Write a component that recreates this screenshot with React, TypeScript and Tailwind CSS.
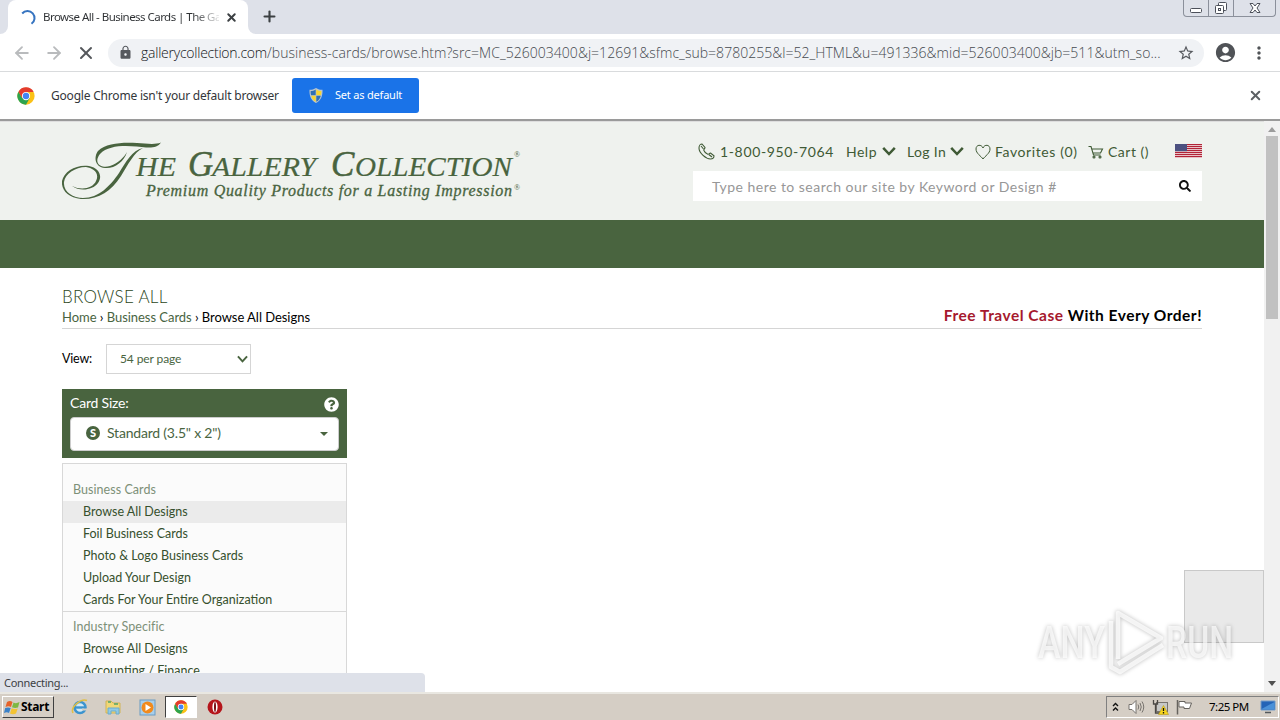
import React from 'react';
import { X, Plus, ArrowLeft, ArrowRight } from 'lucide-react';
import { FaSearch, FaQuestionCircle } from 'react-icons/fa';
import { MdAccountCircle, MdLock, MdStarBorder, MdMoreVert } from 'react-icons/md';

const ChromeLogo = ({ size }: { size: number }) => (
  <svg width={size} height={size} viewBox="0 0 48 48" className="shrink-0">
    <circle cx="24" cy="24" r="23" fill="#fbc116" />
    <path d="M4 12.5 A23 23 0 0 0 24 47 L34 29.5 L14 29.5 Z" fill="#2da44f" />
    <path d="M24 13 H44.3 A23 23 0 0 0 4 12.5 L14 30 Z" fill="#e33b2e" />
    <circle cx="24" cy="24" r="11" fill="#fff" />
    <circle cx="24" cy="24" r="8.5" fill="#4285f4" />
  </svg>
);

const Shield = () => (
  <svg width="16" height="17" viewBox="0 0 16 17" className="shrink-0">
    <path d="M8 1 C6 2.4 4 2.8 1.5 2.8 C1.2 9 3 13.5 8 16 C13 13.5 14.8 9 14.5 2.8 C12 2.8 10 2.4 8 1Z" fill="#b9c6cf" />
    <path d="M7.7 2.4 C6 3.4 4.5 3.9 2.7 4 C2.6 5.8 2.7 7 3.1 8.3 H7.7Z" fill="#2f6fb5" />
    <path d="M8.3 2.4 C10 3.4 11.5 3.9 13.3 4 C13.4 5.8 13.3 7 12.9 8.3 H8.3Z" fill="#f7d531" />
    <path d="M3.2 8.7 H7.7 V14.8 C5.2 13.4 3.8 11.3 3.2 8.7Z" fill="#f7d531" />
    <path d="M12.8 8.7 H8.3 V14.8 C10.8 13.4 12.2 11.3 12.8 8.7Z" fill="#2f6fb5" />
  </svg>
);

const TabStrip = () => (
  <div className="flex h-[34px] shrink-0 items-start justify-between bg-[#dee1e9]">
    <div className="flex h-[34px]">
      <div className="flex h-full w-2 bg-white">
        <div className="h-full w-2 rounded-br-lg bg-[#dee1e9]" />
      </div>
      <div className="flex h-full w-[240px] items-center rounded-t-lg bg-white pl-[13px]">
        <svg width="16" height="16" viewBox="0 0 16 16" className="shrink-0">
          <path d="M1.200 4.500 A7 7 0 1 1 10.500 14.800" fill="none" stroke="#3674c0" strokeWidth="2" />
        </svg>
        <span className="ml-[6px] w-[176px] bg-gradient-to-r from-[#2d3033] from-85% to-[#2d303322] bg-clip-text font-['Noto_Sans',sans-serif] text-[11.5px] tracking-[-0.54px] whitespace-nowrap text-transparent">
          Browse All - Business Cards | The Ga
        </span>
        <X size={13} strokeWidth={3.6} className="ml-[6px] shrink-0 text-[#3c4043]" />
      </div>
      <div className="h-full w-2 bg-white">
        <div className="h-full w-2 rounded-bl-lg bg-[#dee1e9]" />
      </div>
      <Plus size={17} strokeWidth={3} className="mt-[8px] ml-[5px] text-[#3c4043]" />
    </div>
    <div className="mr-[4px] flex h-[17px] w-[93px] rounded-b-[4px] border border-t-0 border-[#8b909b] text-[#4c505a]">
      <div className="flex w-[25px] justify-center border-r border-[#8b909b]">
        <svg width="14" height="16" viewBox="0 0 14 16">
          <rect x="1.5" y="8.5" width="11" height="4" rx="1" fill="#fff" stroke="currentColor" />
        </svg>
      </div>
      <div className="flex w-[25px] justify-center border-r border-[#8b909b]">
        <svg width="14" height="16" viewBox="0 0 14 16">
          <rect x="4.5" y="2.5" width="8" height="8" rx="1" fill="#fff" stroke="currentColor" />
          <rect x="1.5" y="5.5" width="8" height="8" rx="1" fill="#fff" stroke="currentColor" />
          <rect x="4.5" y="8.5" width="2" height="2" fill="none" stroke="currentColor" />
        </svg>
      </div>
      <div className="flex flex-1 justify-center">
        <svg width="14" height="16" viewBox="0 0 14 16">
          <path d="M2 3.5 H5 L7 6 L9 3.5 H12 L9 8 L12 12.5 H9 L7 10 L5 12.5 H2 L5 8 Z" fill="#fff" stroke="currentColor" />
        </svg>
      </div>
    </div>
  </div>
);

const Toolbar = () => (
  <div className="flex h-[38px] shrink-0 items-center border-b border-[#d9dbdd] bg-white font-['Open_Sans',sans-serif]">
    <ArrowLeft size={20} strokeWidth={2.2} className="ml-[12px] text-[#b9bbbd]" />
    <ArrowRight size={20} strokeWidth={2.2} className="ml-[12px] text-[#b9bbbd]" />
    <X size={20} strokeWidth={2.4} className="ml-[12px] text-[#54575b]" />
    <div className="ml-[12px] flex h-[28px] w-[1096px] items-center rounded-full bg-[#f0f2f5] pl-[10px]">
      <MdLock size={15} className="shrink-0 text-[#56595e]" />
      <span className="ml-[8px] w-[1036px] text-[14px] font-light whitespace-nowrap text-[#45494e]">
        <span className="tracking-[-0.24px] text-[#111417]">gallerycollection.com</span>
        <span className="tracking-[0.03px]">/business-cards/browse.htm?src=MC_526003400&amp;j=12691&amp;sfmc_sub=8780255&amp;l=52_HTML&amp;u=491336&amp;mid=526003400&amp;jb=511&amp;utm_so...</span>
      </span>
      <MdStarBorder size={18} className="shrink-0 text-[#56595e]" />
    </div>
    <MdAccountCircle size={23} className="ml-[10px] text-[#505357]" />
    <MdMoreVert size={20} className="ml-[12px] text-[#505357]" />
  </div>
);

const InfoBar = () => (
  <div className="flex h-[49px] shrink-0 items-center border-b-2 border-[#9a9a9a] bg-white font-['Noto_Sans',sans-serif]">
    <div className="ml-[17px]"><ChromeLogo size={18} /></div>
    <span className="ml-[16px] w-[241px] text-[12px] tracking-[-0.2px] whitespace-nowrap text-[#33363a]">
      Google Chrome isn't your default browser
    </span>
    <button className="flex h-[35px] w-[127px] items-center rounded-[3px] bg-[#1a73e8] pl-[16px] text-[11px] tracking-[-0.2px] whitespace-nowrap text-white">
      <Shield />
      <span className="ml-[11px]">Set as default</span>
    </button>
    <X size={15} strokeWidth={3.2} className="mr-[17px] ml-auto text-[#5c6064]" />
  </div>
);

const Logo = () => (
  <svg width="462" height="62" viewBox="0 0 462 62" fill="#49643f" className="font-['Liberation_Serif',serif] italic">
    <path d="M36 9 C44 1 61 0 75 1 C84 1.500 93 3 99 0.500 C96 5 91 6 84 5.500 C71 4 48 1 38 12 C31 21 39 27 48 24 C57 21 62 15 65 10 C62 20 52 27 43 26 C32 25 32 14 36 9Z" />
    <path d="M81 6 C72 10 66 23 59 34 C49 50 35 58 19 57 C6 56 -1 48 0 39 C2 29 15 22 27 24 C37 26 41 34 36 41 C31 48 18 50 10 44 C20 49 31 46 34 39 C38 31 31 26 24 25 C13 25 3 32 2 40 C1 50 11 56 21 56 C37 56 48 44 57 31 C64 20 70 8 81 6Z" />
    <text x="74" y="34" fontSize="27" textLength="40" lengthAdjust="spacingAndGlyphs" stroke="#49643f" strokeWidth=".2">HE</text>
    <text x="126" y="34" fontSize="35" stroke="#49643f" strokeWidth=".5">G</text>
    <text x="150" y="34" fontSize="27" textLength="104" lengthAdjust="spacingAndGlyphs" stroke="#49643f" strokeWidth=".2">ALLERY</text>
    <text x="269" y="34" fontSize="35" stroke="#49643f" strokeWidth=".5">C</text>
    <text x="293" y="34" fontSize="27" textLength="157" lengthAdjust="spacingAndGlyphs" stroke="#49643f" strokeWidth=".2">OLLECTION</text>
    <text x="84" y="54" fontSize="16" textLength="366" stroke="#49643f" strokeWidth=".3">Premium Quality Products for a Lasting Impression</text>
    <text x="452" y="15" fontSize="8" className="not-italic">®</text>
    <text x="452" y="48" fontSize="8" className="not-italic">®</text>
  </svg>
);

const Chevron = ({ width }: { width: number }) => (
  <svg width={width} height={width * 0.72} viewBox="0 0 14 10" className="shrink-0">
    <path d="M1.200 1.800 L7 8 L12.800 1.800" fill="none" stroke="currentColor" strokeWidth="2.500" />
  </svg>
);

const PhoneIcon = () => (
  <svg width="17" height="17" viewBox="0 0 17 17" fill="none" stroke="currentColor" strokeWidth="1.100" className="shrink-0">
    <path d="M1 5 C1 2.500 2.500 1 4 1 L7 4.500 C7.200 5.500 5.500 6.200 5.800 7.200 C6.500 9 8 10.500 9.800 11.200 C11 11.500 11.500 9.800 12.500 10 L16 12.800 C16 14.500 14.500 16 12.500 16 C8 16 1 10 1 5Z" />
    <path d="M3 3 L5.500 6 M10.800 11.500 L14 14" />
  </svg>
);

const HeartIcon = () => (
  <svg width="16" height="16" viewBox="0 0 16 16" fill="none" stroke="currentColor" className="shrink-0">
    <path d="M8 15 C6 12 1 9.500 1 5 C1 0.500 6.500 0 8 4 C9.500 0 15 0.500 15 5 C15 9.500 10 12 8 15Z" />
  </svg>
);

const CartIcon = () => (
  <svg width="16" height="14" viewBox="0 0 16 14" fill="none" stroke="currentColor" strokeWidth="1.100" className="shrink-0">
    <path d="M0.500 1.500 H3 L5.500 10 H12.500 M4 4 H14.500 L12.500 8 H5" />
    <circle cx="6" cy="12" r="1" />
    <circle cx="12" cy="12" r="1" />
  </svg>
);

const Flag = () => (
  <svg width="27" height="14" viewBox="0 0 27 14">
    <rect width="27" height="14" fill="#f4e9ea" />
    {[0, 2, 4, 6, 8, 10, 12].map((y) => (
      <rect key={y} y={y} width="27" height="1.2" fill="#b22437" />
    ))}
    <rect width="12" height="7.200" fill="#4c5180" />
  </svg>
);

const SiteHeader = () => (
  <>
    <div className="flex h-[99px] shrink-0 justify-between border-t border-[#dedede] bg-[#eff2ee] pr-[62px] pl-[62px] text-[#3f5a35]">
      <div className="pt-[20px]"><Logo /></div>
      <div className="w-[509px] pt-[19px]">
        <div className="flex h-[21px] items-center text-[14px] whitespace-nowrap">
          <span className="ml-[5px]"><PhoneIcon /></span>
          <span className="ml-[5px] w-[126px] tracking-[0.65px]">1-800-950-7064</span>
          <span className="w-[36px] tracking-[0.5px]">Help</span>
          <Chevron width={14} />
          <span className="ml-[11px] w-[43px] tracking-[0.35px]">Log In</span>
          <Chevron width={14} />
          <span className="ml-[11px]"><HeartIcon /></span>
          <span className="ml-[4px] w-[93px] tracking-[0.6px]">Favorites (0)</span>
          <CartIcon />
          <span className="ml-[4px] tracking-[0.5px]">Cart ()</span>
          <div className="mb-[2px] ml-auto"><Flag /></div>
        </div>
        <div className="mt-[9px] flex h-[30px] items-center justify-between bg-white pr-[11px] pl-[19px]">
          <span className="text-[14px] tracking-[0.48px] text-[#979797]">Type here to search our site by Keyword or Design #</span>
          <FaSearch size={12} className="text-[#111]" />
        </div>
      </div>
    </div>
    <div className="h-[48px] shrink-0 bg-[#49643f]" />
  </>
);

const sections = [
  {
    title: 'Business Cards',
    items: ['Browse All Designs', 'Foil Business Cards', 'Photo & Logo Business Cards', 'Upload Your Design', 'Cards For Your Entire Organization'],
  },
  {
    title: 'Industry Specific',
    items: ['Browse All Designs', 'Accounting / Finance'],
  },
];

const Sidebar = () => (
  <aside className="w-[285px]">
    <div className="h-[69px] bg-[#49643f] px-[8px]">
      <div className="flex h-[28px] items-center justify-between text-[14px] text-white">
        <span className="mb-[1px] tracking-[-0.2px]">Card Size:</span>
        <FaQuestionCircle size={15} className="mt-[2px]" />
      </div>
      <div className="flex h-[34px] items-center rounded-[4px] border border-[#ccc] bg-white pr-[10px] pb-[2px] pl-[15px] text-[14px] text-[#49643f]">
        <span className="flex size-[14px] items-center justify-center rounded-full bg-[#49643f] text-[11px] font-black text-white">S</span>
        <span className="mb-[1px] ml-[7px] tracking-[-0.2px]">Standard (3.5" x 2")</span>
        <span className="mt-[1px] ml-auto border-x-4 border-t-4 border-x-transparent border-t-[#49643f]" />
      </div>
    </div>
    <div className="mt-[5px] border border-[#d8d8d8] bg-[#fbfbfb] pt-[15px] text-[12.5px] leading-[22px]">
      {sections.map((section, i) => (
        <div key={section.title} className={i > 0 ? 'border-t border-[#d8d8d8] pt-[4px]' : ''}>
          <div className="h-[22px] pl-[10px] tracking-[0.05px] text-[#7d9078]">{section.title}</div>
          {section.items.map((item, j) => (
            <div key={item} className={`h-[22px] pl-[20px] text-[#36502d] ${i === 0 && j === 0 ? 'bg-[#ebebeb]' : ''}`}>
              {item}
            </div>
          ))}
        </div>
      ))}
    </div>
  </aside>
);

const Content = () => (
  <main className="h-[424px] shrink-0 overflow-hidden bg-white px-[62px] pt-[18px]">
    <div className="flex h-[43px] items-end justify-between border-b border-[#d5d5d5]">
      <div className="pb-[1px]">
        <h1 className="text-[17px] leading-[20px] font-light tracking-[0.25px] text-[#2a4520]">BROWSE ALL</h1>
        <div className="text-[13px] leading-[20px] tracking-[-0.04px] text-black">
          <span className="text-[#49643f]">Home</span> › <span className="text-[#49643f]">Business Cards</span> › Browse All Designs
        </div>
      </div>
      <div className="pb-[1px] text-[15.5px] leading-[24px] font-bold tracking-[0.5px] text-black">
        <span className="text-[#a6192e]">Free Travel Case</span> With Every Order!
      </div>
    </div>
    <div className="mt-[15px] flex h-[30px] items-center text-[12px] text-black">
      <span className="w-[44px] text-[12.5px] tracking-[-0.2px]">View:</span>
      <div className="flex h-full w-[145px] items-center justify-between border border-[#d5d5d5] pr-[2px] pl-[13px] text-[#49643f]">
        <span className="tracking-[-0.1px]">54 per page</span>
        <Chevron width={11} />
      </div>
    </div>
    <div className="mt-[15px]"><Sidebar /></div>
  </main>
);

const Scrollbar = () => (
  <div className="flex w-[16px] shrink-0 flex-col items-center justify-between bg-[#f1f1f1] pt-[6px] pb-[6px]">
    <div className="flex flex-col items-center">
      <span className="border-x-4 border-b-[5px] border-x-transparent border-b-[#9c9c9c]" />
      <span className="mt-[4px] h-[183px] w-[12px] bg-[#c1c1c1]" />
    </div>
    <span className="border-x-4 border-t-[5px] border-x-transparent border-t-[#505050]" />
  </div>
);

const Watermark = () => (
  <svg width="200" height="68" viewBox="0 0 200 68" className="absolute top-[607px] left-[1036px] overflow-visible font-['Roboto',sans-serif] drop-shadow-[0_0_2px_rgba(0,0,0,0.35)]">
    <g fill="#fff" fillOpacity=".7" fontSize="45" fontWeight="500">
      <text x="2" y="51" textLength="67" lengthAdjust="spacingAndGlyphs">ANY</text>
      <text x="130" y="51" textLength="67" lengthAdjust="spacingAndGlyphs">RUN</text>
    </g>
    <g fill="none" stroke="#fff" strokeOpacity=".75" strokeWidth="4.500" strokeLinejoin="round">
      <path d="M82 52 V6 L125 31 L82 57" />
      <path d="M75 14 V60 L84 65 L127 38" />
    </g>
  </svg>
);

const Taskbar = () => (
  <div className="flex h-[28px] shrink-0 border-t-2 border-[#e9e7e1] bg-[#d5cec5] font-['Noto_Sans',sans-serif] text-black">
    <div className="mt-[2px] ml-[2px] flex h-[22px] w-[52px] items-center border border-t-white border-r-[#404040] border-b-[#404040] border-l-white pl-[1px]">
      <svg width="17" height="16" viewBox="0 0 17 16" className="shrink-0">
        <path d="M3 3 Q6 1 8.500 3 L7 8 Q4.500 6.500 1.500 8Z" fill="#e6632a" />
        <path d="M9.500 3.500 Q12 5 15.500 3 L14 8.500 Q11 9.500 8 8.300Z" fill="#7eb843" />
        <path d="M1.200 9 Q4 7.800 6.700 9 L5 14 Q3 12.500 0 14Z" fill="#3b82c9" />
        <path d="M7.700 9.300 Q10.500 10.700 13.700 9.500 L12 14.500 Q9 16 6 14.500Z" fill="#f3c332" />
      </svg>
      <span className="text-[12px] font-bold tracking-[-0.3px]">Start</span>
    </div>
    <div className="flex items-center">
      <svg width="18" height="18" viewBox="0 0 18 18" className="ml-[17px]">
        <circle cx="9" cy="9.500" r="5.500" fill="#d4e9f4" stroke="#3c94cf" strokeWidth="2.600" />
        <path d="M4 9.500 H14" stroke="#3c94cf" strokeWidth="2.400" />
        <path d="M2 15 C-1 9 10 0 16 2.500" fill="none" stroke="#e1bf45" strokeWidth="1.500" />
        <path d="M11 11.500 H16" stroke="#d5cec5" strokeWidth="2" />
      </svg>
      <svg width="17" height="16" viewBox="0 0 17 16" className="ml-[16px]">
        <path d="M1 2 H6 L8 4 H15 V14 H1Z" fill="#f1d877" stroke="#d2b356" />
        <path d="M3 3 H6 M9 5 H13" stroke="#53a46b" strokeWidth="1.500" />
        <path d="M3 9 H14 V15 H11 V12 H6 V15 H3Z" fill="#8fc9e7" stroke="#6baccd" />
      </svg>
      <svg width="17" height="17" viewBox="0 0 17 17" className="ml-[17px]">
        <rect x="1" y="1" width="15" height="15" fill="#a8cfeb" stroke="#6b9bc4" />
        <circle cx="8.500" cy="8.500" r="6" fill="#f18a1d" />
        <path d="M6.500 5 L12 8.500 L6.500 12Z" fill="#fff" />
      </svg>
      <div className="ml-[9px] flex h-[22px] w-[32px] items-center justify-center border border-t-[#404040] border-r-white border-b-white border-l-[#404040] bg-white">
        <ChromeLogo size={14} />
      </div>
      <svg width="16" height="16" viewBox="0 0 16 16" className="ml-[10px]">
        <circle cx="8" cy="8" r="7.500" fill="#b5151b" />
        <ellipse cx="8" cy="8" rx="2.600" ry="5.500" fill="#fff" />
        <ellipse cx="8" cy="8" rx="1" ry="5" fill="#791015" />
      </svg>
    </div>
    <div className="mt-[2px] mr-[1px] ml-auto flex h-[22px] w-[173px] items-center border border-t-[#808080] border-r-white border-b-white border-l-[#808080] pl-[5px]">
      <svg width="7" height="10" viewBox="0 0 7 10" fill="none" stroke="#111" strokeWidth="1.400">
        <path d="M1 4 L3.500 1.500 L6 4 M1 8.500 L3.500 6 L6 8.500" />
      </svg>
      <svg width="17" height="16" viewBox="0 0 17 16" className="ml-[9px]" fill="none" stroke="#77736e">
        <path d="M1 5.500 H4 L8 1.500 V14.500 L4 10.500 H1Z" fill="#fff" />
        <path d="M10 5.500 Q11.500 8 10 10.500 M12 4 Q14.500 8 12 12 M14 2.500 Q17.500 8 14 13.500" />
      </svg>
      <svg width="17" height="16" viewBox="0 0 17 16" className="ml-[7px]">
        <rect x="4.500" y="3.500" width="11" height="9" fill="#c7c8c7" stroke="#77736e" />
        <path d="M1.500 1 V5 H5.500 V1 M3.500 5 V14 H8" fill="none" stroke="#4a4845" strokeWidth="1.300" />
        <path d="M11.500 6.500 L16.500 15.500 H6.500Z" fill="#f7d51d" stroke="#b69715" strokeWidth=".6" />
        <path d="M11.500 9 V12 M11.500 13 V14.500" stroke="#111" strokeWidth="1.300" />
      </svg>
      <svg width="17" height="16" viewBox="0 0 17 16" className="ml-[7px]" stroke="#66635e">
        <path d="M1.500 1 V15.500" strokeWidth="1.500" />
        <path d="M3 2.500 H9 V4 H15.500 L13.500 9.500 H8 V8 H3Z" fill="#fff" />
      </svg>
      <span className="ml-[16px] w-[51px] text-[11.5px] tracking-[-0.5px] whitespace-nowrap">7:25 PM</span>
      <svg width="16" height="14" viewBox="0 0 16 14">
        <path d="M1 1 H15 V10 H1Z" fill="#2464b7" stroke="#749cc8" />
        <path d="M1.500 9 L14.500 2 V9.500 H1.500Z" fill="#4b91d8" />
        <path d="M5 12.500 H11" stroke="#53585c" strokeWidth="1.500" />
      </svg>
    </div>
  </div>
);

export default function App() {
  return (
    <div className="relative flex h-[720px] w-[1280px] flex-col overflow-hidden bg-white font-['Lato',sans-serif]">
      <TabStrip />
      <Toolbar />
      <InfoBar />
      <div className="flex h-[571px] shrink-0">
        <div className="flex min-w-0 flex-1 flex-col">
          <SiteHeader />
          <Content />
        </div>
        <Scrollbar />
      </div>
      <Taskbar />
      <div className="absolute top-[673px] left-0 h-[19px] w-[425px] rounded-tr-[4px] bg-[#dee1e9] pl-[4px] font-['Noto_Sans',sans-serif] text-[11px] leading-[20px] tracking-[-0.28px] text-[#3c4043]">
        Connecting...
      </div>
      <div className="absolute top-[570px] left-[1184px] h-[73px] w-[80px] border border-[#c9c9c9] bg-[#e9e9e9]" />
      <Watermark />
    </div>
  );
}
